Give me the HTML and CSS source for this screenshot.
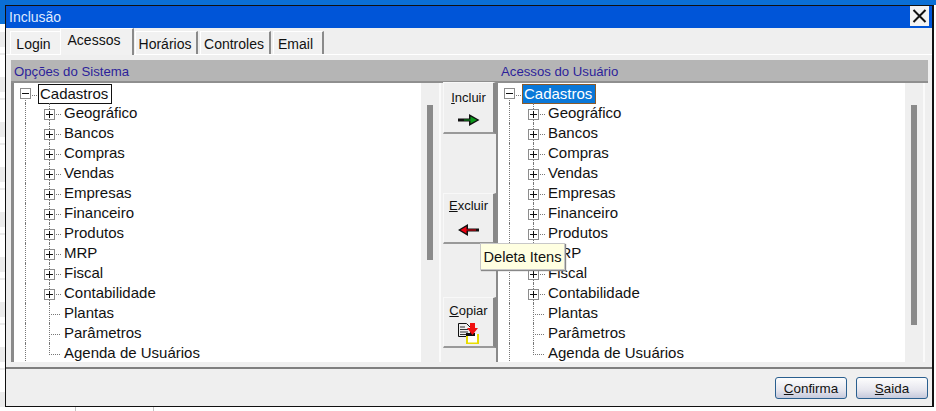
FILE: index.html
```html
<!DOCTYPE html>
<html lang="pt">
<head>
<meta charset="utf-8">
<title>Inclusão</title>
<link rel="stylesheet" href="styles.css">
</head>
<body>
<div class="window">
  <div class="titlebar"><span>Inclusão</span><button class="close"><svg width="15" height="14" viewBox="0 0 15 14"><path d="M1.500 1L13.500 13M13.500 1L1.500 13" stroke="#111" stroke-width="2" fill="none"/></svg></button></div>
  <div class="tabs">
    <div class="tab t-login">Login</div>
    <div class="tab t-acessos active">Acessos</div>
    <div class="tab t-horarios">Horários</div>
    <div class="tab t-controles">Controles</div>
    <div class="tab t-email">Email</div>
  </div>
  <div class="page">
    <div class="header"><span class="h-left">Opções do Sistema</span><span class="h-right">Acessos do Usuário</span></div>
    <div class="content">
      <div class="pane pane-left">
        <div class="tree">
          <div class="row root"><i class="box minus"></i><b class="label focus">Cadastros</b></div>
          <div class="row"><i class="box"></i><b class="label">Geográfico</b></div>
          <div class="row"><i class="box"></i><b class="label">Bancos</b></div>
          <div class="row"><i class="box"></i><b class="label">Compras</b></div>
          <div class="row"><i class="box"></i><b class="label">Vendas</b></div>
          <div class="row"><i class="box"></i><b class="label">Empresas</b></div>
          <div class="row"><i class="box"></i><b class="label">Financeiro</b></div>
          <div class="row"><i class="box"></i><b class="label">Produtos</b></div>
          <div class="row"><i class="box"></i><b class="label">MRP</b></div>
          <div class="row"><i class="box"></i><b class="label">Fiscal</b></div>
          <div class="row"><i class="box"></i><b class="label">Contabilidade</b></div>
          <div class="row leaf"><b class="label">Plantas</b></div>
          <div class="row leaf"><b class="label">Parâmetros</b></div>
          <div class="row leaf last"><b class="label">Agenda de Usuários</b></div>
        </div>
        <div class="track"><div class="thumb thumb-left"></div></div>
      </div>
      <div class="actions">
        <button class="act act-in"><span><u>I</u>ncluir</span>
          <svg width="22" height="12" viewBox="0 0 22 12"><path d="M0 4.500h11V0L21.500 6L11 12V7.500H0z" fill="#111"/><path d="M6 5.500h6.500V2.500L19 6l-6.500 3.500V6.500H6z" fill="#0a9a1a"/></svg></button>
        <button class="act act-ex"><span><u>E</u>xcluir</span>
          <svg width="22" height="12" viewBox="0 0 22 12"><path d="M21 4.500H10V0L0 6L10 12V7.500H21z" fill="#111"/><path d="M18 5.500H8.500V2.500L2.500 6l6 3.500V6.500H18z" fill="#f00010"/></svg></button>
        <button class="act act-co"><span><u>C</u>opiar</span>
          <svg width="22" height="21" viewBox="0 0 22 21"><path d="M.5.500h8l4 4v9H.5z" fill="#eee" stroke="#111"/><path d="M2 4h5M2 6.500h8M2 9h8M2 11.500h8" stroke="#333"/><path d="M9 11h11v9.500H9z" fill="#fff"/><path d="M9 20.500V11M20 20.500V11M8 20.500h13" stroke="#e8dc00" stroke-width="2" fill="none"/><path d="M8 10h9v3H8z" fill="#111"/><path d="M12 0h5v5h3l-5.500 7L9 5h3z" fill="#f01010"/></svg></button>
      </div>
      <div class="pane pane-right">
        <div class="tree">
          <div class="row root"><i class="box minus"></i><b class="label selected">Cadastros</b></div>
          <div class="row"><i class="box"></i><b class="label">Geográfico</b></div>
          <div class="row"><i class="box"></i><b class="label">Bancos</b></div>
          <div class="row"><i class="box"></i><b class="label">Compras</b></div>
          <div class="row"><i class="box"></i><b class="label">Vendas</b></div>
          <div class="row"><i class="box"></i><b class="label">Empresas</b></div>
          <div class="row"><i class="box"></i><b class="label">Financeiro</b></div>
          <div class="row"><i class="box"></i><b class="label">Produtos</b></div>
          <div class="row"><i class="box"></i><b class="label">MRP</b></div>
          <div class="row"><i class="box"></i><b class="label">Fiscal</b></div>
          <div class="row"><i class="box"></i><b class="label">Contabilidade</b></div>
          <div class="row leaf"><b class="label">Plantas</b></div>
          <div class="row leaf"><b class="label">Parâmetros</b></div>
          <div class="row leaf last"><b class="label">Agenda de Usuários</b></div>
        </div>
        <div class="track"><div class="thumb thumb-right"></div></div>
      </div>
    </div>
    <div class="tooltip">Deleta Itens</div>
  </div>
  <div class="footer">
    <button class="btn"><u>C</u>onfirma</button>
    <button class="btn"><u>S</u>aida</button>
  </div>
</div>
</body>
</html>
```
FILE: styles.css
```css
* { box-sizing: border-box; }
html, body { margin: 0; height: 411px; overflow: hidden; }
body {
  width: 936px;
  padding: 5px 2px 4px 5px;
  font-family: "Liberation Sans", Arial, sans-serif;
  font-size: 15px;
  color: #111;
  background-color: #fff;
  background-image:
    linear-gradient(#0a6fd6, #0a6fd6),
    linear-gradient(#0a6fd6, #0a6fd6),
    repeating-linear-gradient(#ececec 0 15px, #fff 15px 21px, #ececec 21px 23px, #fff 23px 45px),
    linear-gradient(#c4c4c4, #c4c4c4),
    linear-gradient(#c4c4c4, #c4c4c4);
  background-size: 100% 5px, 5px 24px, 5px 100%, 1px 4px, 1px 4px;
  background-position: 0 0, 0 0, 0 32px, 75px 407px, 153px 407px;
  background-repeat: no-repeat;
}
.window {
  height: 402px;
  display: flex;
  flex-direction: column;
  border: 1px solid #111;
  border-right-width: 2px;
  background: #efefef;
}
.titlebar {
  height: 22px;
  flex: none;
  display: flex;
  align-items: flex-start;
  justify-content: space-between;
  padding: 3px 0 0 3px;
  background: #0055d8;
  color: #dfe9ff;
  font-size: 14px;
}
.close {
  width: 19px;
  height: 20px;
  padding: 0;
  border: 0;
  margin: -3px 3px 0 0;
  background: #f3f3f3;
  display: flex;
  align-items: center;
  justify-content: center;
}
.tabs {
  height: 27px;
  flex: none;
  display: flex;
  align-items: flex-end;
  padding: 0 0 0 4px;
  border-bottom: 1px solid #fff;
  gap: 1px;
}
.tab {
  height: 23px;
  padding-top: 4px;
  text-align: center;
  font-size: 14px;
  background: #f1f1f1;
  border-top: 1px solid #fff;
  border-left: 1px solid #fff;
  border-right: 2px solid #8a8a8a;
}
.t-login { width: 50px; margin-right: -1px; border-right: 0; padding-right: 4px; }
.t-acessos { width: 74px; padding-right: 5px; }
.t-horarios { width: 63px; padding-right: 2px; }
.t-controles { width: 71px; margin-left: 1px; padding-right: 2px; }
.t-email { width: 51px; margin-left: 1px; padding-right: 5px; }
.tab.active {
  height: 27px;
  margin-bottom: -1px;
  padding-top: 3px;
  position: relative;
}
.page {
  flex: 1;
  min-height: 0;
  position: relative;
  padding: 5px 4px 5px 5px;
  display: flex;
  flex-direction: column;
  border-bottom: 2px solid #7f7f7f;
}
.header {
  height: 23px;
  flex: none;
  display: flex;
  background: #b5b5b5;
  border-bottom: 2px solid #8f8f8f;
  color: #2c1f9a;
  font-size: 13.2px;
  padding: 4px 0 0 3px;
}
.h-left { width: 487px; }
.content {
  flex: 1;
  min-height: 0;
  display: flex;
}
.pane { display: flex; }
.pane-left { width: 430px; border-left: 3px solid #8a8a8a; }
.pane-right { width: 429px; border-left: 2px solid #8a8a8a; }
.tree {
  flex: 1;
  background: #fff;
  overflow: hidden;
  padding-left: 4px;
}
.track {
  width: 20px;
  flex: none;
  background: #efefef;
  border-right: 2px solid #fafafa;
  padding: 22px 0 0 6px;
}
.thumb { width: 6px; background: #8a8a8a; }
.thumb-left { height: 155px; }
.thumb-right { height: 220px; }
.row {
  height: 20px;
  display: flex;
  align-items: center;
  position: relative;
  padding-left: 26px;
}
.row::before {
  content: "";
  position: absolute;
  left: 7px;
  top: 0;
  bottom: 0;
  border-left: 1px dotted #777;
}
.row::after {
  content: "";
  position: absolute;
  left: 31px;
  top: 0;
  bottom: 0;
  border-left: 1px dotted #777;
}
.row.root {
  padding: 1px 0 0 2px;
  align-items: flex-start;
}
.row.root::before { top: 10px; }
.row.root::after { display: none; }
.row.last::after { bottom: 10px; }
.row.leaf { padding-left: 42px; }
.box {
  width: 11px;
  height: 11px;
  flex: none;
  background: #fff;
  border: 1px solid #8c8c8c;
  position: relative;
  top: 1px;
  z-index: 1;
}
.root .box { top: 4px; }
.box::before {
  content: "";
  position: absolute;
  left: 1px;
  top: 4px;
  width: 7px;
  height: 1px;
  background: #111;
}
.box:not(.minus)::after {
  content: "";
  position: absolute;
  left: 4px;
  top: 1px;
  width: 1px;
  height: 7px;
  background: #111;
}
.label {
  font-weight: 400;
  white-space: nowrap;
  margin-left: 8px;
  line-height: 18px;
  padding: 0 1px;
  position: relative;
}
.label::before {
  content: "";
  position: absolute;
  left: -7px;
  top: 10px;
  width: 5px;
  border-top: 1px dotted #777;
}
.leaf .label { margin-left: 3px; }
.leaf .label::before { left: -14px; width: 11px; }
.focus, .selected {
  margin-left: 7px;
  padding: 0 3px 0 1px;
}
.focus { border: 1px solid #111; }
.selected {
  background: #0a78d8;
  color: #fff;
  border: 1px solid #8a5a2a;
}
.actions {
  width: 55px;
  flex: none;
  display: flex;
  flex-direction: column;
  padding-left: 2px;
}
.act {
  width: 53px;
  height: 52px;
  flex: none;
  padding: 5px 0 0;
  font: inherit;
  font-size: 13px;
  color: #111;
  background: #efefef;
  border: 1px solid #f8f8f8;
  border-right: 3px solid #888;
  border-bottom: 2px solid #999;
  display: flex;
  flex-direction: column;
  align-items: center;
  gap: 9px;
}
.act-in { margin-top: -1px; padding-top: 7px; }
.act-ex { margin-top: 59px; height: 51px; padding-top: 4px; gap: 11px; }
.act-co { margin-top: 53px; height: 51px; gap: 5px; }
.tooltip {
  position: absolute;
  left: 474px;
  top: 188px;
  width: 85px;
  height: 27px;
  background: #ffffe1;
  border: 1px solid #c8c8c8;
  box-shadow: 1px 1px 1px #888;
  display: flex;
  align-items: center;
  justify-content: center;
  font-size: 14.6px;
  z-index: 2;
}
.footer {
  height: 37px;
  flex: none;
  display: flex;
  justify-content: flex-end;
  align-items: flex-start;
  gap: 9px;
  padding: 8px 4px 0 0;
}
.btn {
  width: 72px;
  height: 22px;
  padding: 0;
  font: inherit;
  font-size: 13.4px;
  color: #111;
  border: 1px solid #2a5f8f;
  border-radius: 3px;
  background: linear-gradient(#fdfdfd, #e6e6ee 60%, #c5c9dc);
}
```
